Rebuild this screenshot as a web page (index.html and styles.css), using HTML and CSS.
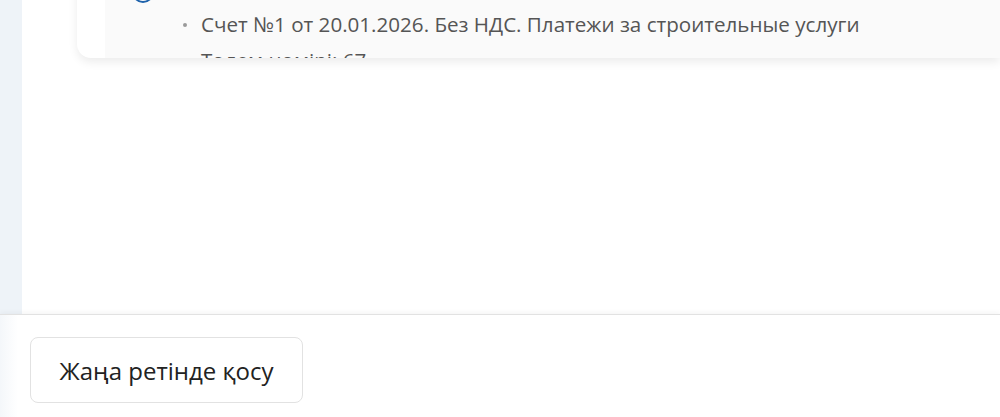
FILE: index.html
```html
<!DOCTYPE html>
<html lang="kk">
<head>
    <meta charset="UTF-8">
    <meta name="viewport" content="width=device-width, initial-scale=1.0">
    <title>Төлем</title>
    <link rel="stylesheet" href="styles.css">
</head>
<body>
    <div class="screen">
        <div class="workspace">
            <div class="side-strip"></div>
            <div class="main">
                <div class="payment-card">
                    <div class="card-body">
                        <div class="step-icon"></div>
                        <div class="details">
                            <ul class="purpose-list">
                                <li>Счет №1 от 20.01.2026. Без НДС. Платежи за строительные услуги</li>
                            </ul>
                            <div class="payment-number">Төлем нөмірі: 67</div>
                        </div>
                    </div>
                </div>
            </div>
        </div>

        <div class="footer">
            <button class="add-new-btn">Жаңа ретінде қосу</button>
        </div>
    </div>
</body>
</html>
```

FILE: styles.css
```css
:root {
    --strip-color: #eef3f8;
    --panel-color: #fafafa;
    --text-muted: #555;
    --text-dark: #222;
    --border-color: #e2e2e2;
    --accent-blue: #1e62ab;
}

* {
    box-sizing: border-box;
}

body {
    margin: 0;
    font-family: 'Open Sans', 'Noto Sans', sans-serif;
    background: #fff;
    overflow: hidden;
}

.screen {
    width: 1000px;
    height: 417px;
    display: flex;
    flex-direction: column;
}

.workspace {
    flex: 1;
    display: flex;
    min-height: 0;
}

.side-strip {
    width: 22px;
    background: var(--strip-color);
}

.main {
    flex: 1;
    background: #fff;
    padding-left: 55px;
    overflow: hidden;
}

.payment-card {
    height: 140px;
    margin-top: -82px;
    background: #fff;
    border-radius: 0 0 0 14px;
    box-shadow: 0 4px 10px rgba(0, 0, 0, 0.08);
    overflow: hidden;
}

.card-body {
    height: 100%;
    margin-left: 28px;
    background: var(--panel-color);
    display: flex;
    gap: 30px;
    padding-left: 27px;
}

.step-icon {
    width: 22px;
    height: 22px;
    margin-top: 63px;
    border: 2px solid var(--accent-blue);
    border-radius: 50%;
    flex-shrink: 0;
}

.details {
    padding-top: 91px;
    color: var(--text-muted);
    font-size: 20.6px;
}

.purpose-list {
    margin: 0;
    padding-left: 17px;
    list-style: none;
}

.purpose-list li {
    position: relative;
    line-height: 30px;
}

.purpose-list li::before {
    content: '';
    position: absolute;
    left: -18px;
    top: 14px;
    width: 4px;
    height: 4px;
    border-radius: 50%;
    background: #9a9a9a;
}

.payment-number {
    margin-top: 6px;
    padding-left: 17px;
    line-height: 30px;
}

.footer {
    height: 103px;
    border-top: 1px solid var(--border-color);
    box-shadow: 0 -2px 5px rgba(0, 0, 0, 0.04);
    background: linear-gradient(90deg, #f4f7fa 0, #fff 18px);
    padding: 22px 30px;
    position: relative;
}

.add-new-btn {
    height: 66px;
    width: 273px;
    background: #fff;
    border: 1px solid var(--border-color);
    border-radius: 8px;
    font-family: inherit;
    font-size: 24px;
    color: var(--text-dark);
    cursor: pointer;
}
```
